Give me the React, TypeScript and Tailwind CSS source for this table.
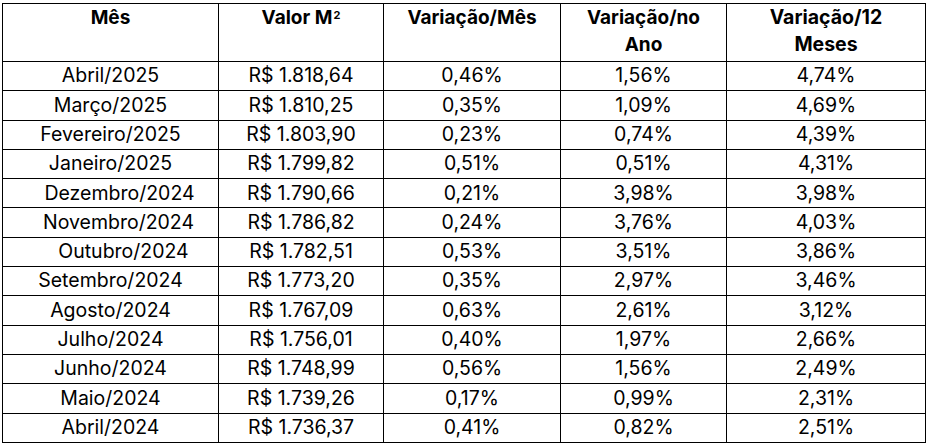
const rows = [
  ['Abril/2025', 'R$ 1.818,64', '0,46%', '1,56%', '4,74%'],
  ['Março/2025', 'R$ 1.810,25', '0,35%', '1,09%', '4,69%'],
  ['Fevereiro/2025', 'R$ 1.803,90', '0,23%', '0,74%', '4,39%'],
  ['Janeiro/2025', 'R$ 1.799,82', '0,51%', '0,51%', '4,31%'],
  ['Dezembro/2024', 'R$ 1.790,66', '0,21%', '3,98%', '3,98%'],
  ['Novembro/2024', 'R$ 1.786,82', '0,24%', '3,76%', '4,03%'],
  ['Outubro/2024', 'R$ 1.782,51', '0,53%', '3,51%', '3,86%'],
  ['Setembro/2024', 'R$ 1.773,20', '0,35%', '2,97%', '3,46%'],
  ['Agosto/2024', 'R$ 1.767,09', '0,63%', '2,61%', '3,12%'],
  ['Julho/2024', 'R$ 1.756,01', '0,40%', '1,97%', '2,66%'],
  ['Junho/2024', 'R$ 1.748,99', '0,56%', '1,56%', '2,49%'],
  ['Maio/2024', 'R$ 1.739,26', '0,17%', '0,99%', '2,31%'],
  ['Abril/2024', 'R$ 1.736,37', '0,41%', '0,82%', '2,51%'],
]

// some month cells in the source sheet sit a bit right of centre
const monthPad: Record<string, string> = {
  'Dezembro/2024': 'pl-[18px]',
  'Novembro/2024': 'pl-[16px]',
  'Outubro/2024': 'pl-[26px]',
}

export default function App() {
  return (
    <div className="w-[929px] h-[445px] bg-white pl-[2px] pt-[3px] font-['Inter',sans-serif] text-black">
      <table className="table-fixed border-collapse border border-black">
        <colgroup>
          <col className="w-[216px]" />
          <col className="w-[165px]" />
          <col className="w-[177px]" />
          <col className="w-[166px]" />
          <col className="w-[199px]" />
        </colgroup>
        <thead>
          <tr className="h-[58px] align-top font-bold text-[19px] leading-[27px]">
            <th className="border border-black pt-0">Mês</th>
            <th className="border border-black pt-0">
              Valor M<sup className="text-[11px] relative -top-[5px] ml-[1px]">2</sup>
            </th>
            <th className="border border-black pt-0">Variação/Mês</th>
            <th className="border border-black pt-0">Variação/no<br />Ano</th>
            <th className="border border-black pt-0 text-[19.5px]">Variação/12<br />Meses</th>
          </tr>
        </thead>
        <tbody>
          {rows.map((r) => (
            <tr key={r[0]} className="h-[29.3px] leading-none text-[19.5px]">
              {r.map((c, i) => (
                <td
                  key={i}
                  className={`border border-black text-center p-0 ${i === 0 ? monthPad[c] ?? '' : ''}`}
                >
                  {c}
                </td>
              ))}
            </tr>
          ))}
        </tbody>
      </table>
    </div>
  )
}
